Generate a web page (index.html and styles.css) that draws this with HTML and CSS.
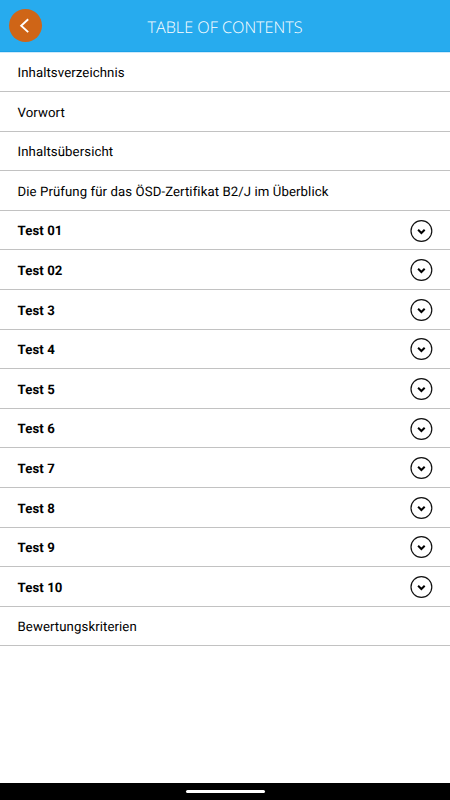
FILE: index.html
```html
<!DOCTYPE html>
<html lang="de">
<head>
    <meta charset="UTF-8">
    <meta name="viewport" content="width=device-width, initial-scale=1.0">
    <title>Table of Contents</title>
    <link rel="stylesheet" href="styles.css">
</head>
<body>
    <svg width="0" height="0" class="sprite">
        <symbol id="chevron" viewBox="0 0 24 24">
            <circle cx="12.4" cy="12" r="10.4" fill="none" stroke="#111" stroke-width="1.2"/>
            <path d="M9.1 10.7l3.3 3.3 3.3-3.3" fill="none" stroke="#000" stroke-width="2"/>
        </symbol>
    </svg>

    <header class="header">
        <button class="back" aria-label="Back">
            <svg width="33" height="33" viewBox="0 0 33 33">
                <path d="M19.2 10.3L12.2 16.7l7 6.4" fill="none" stroke="#fff" stroke-width="1.9"/>
            </svg>
        </button>
        <h1 class="title">TABLE OF CONTENTS</h1>
    </header>

    <ul class="toc">
        <li class="item"><span class="label">Inhaltsverzeichnis</span></li>
        <li class="item"><span class="label">Vorwort</span></li>
        <li class="item"><span class="label">Inhaltsübersicht</span></li>
        <li class="item"><span class="label">Die Prüfung für das ÖSD-Zertifikat B2/J im Überblick</span></li>
        <li class="item test"><span class="label">Test 01</span><svg class="toggle"><use href="#chevron"/></svg></li>
        <li class="item test"><span class="label">Test 02</span><svg class="toggle"><use href="#chevron"/></svg></li>
        <li class="item test"><span class="label">Test 3</span><svg class="toggle"><use href="#chevron"/></svg></li>
        <li class="item test"><span class="label">Test 4</span><svg class="toggle"><use href="#chevron"/></svg></li>
        <li class="item test"><span class="label">Test 5</span><svg class="toggle"><use href="#chevron"/></svg></li>
        <li class="item test"><span class="label">Test 6</span><svg class="toggle"><use href="#chevron"/></svg></li>
        <li class="item test"><span class="label">Test 7</span><svg class="toggle"><use href="#chevron"/></svg></li>
        <li class="item test"><span class="label">Test 8</span><svg class="toggle"><use href="#chevron"/></svg></li>
        <li class="item test"><span class="label">Test 9</span><svg class="toggle"><use href="#chevron"/></svg></li>
        <li class="item test"><span class="label">Test 10</span><svg class="toggle"><use href="#chevron"/></svg></li>
        <li class="item"><span class="label">Bewertungskriterien</span></li>
    </ul>

    <!-- System navigation bar -->
    <footer class="navbar"><div class="handle"></div></footer>
</body>
</html>
```
FILE: styles.css
```css
* {
    box-sizing: border-box;
}

body {
    margin: 0;
    height: 100vh;
    display: flex;
    flex-direction: column;
    overflow: hidden;
    background-color: #fff;
    color: #000;
    font-family: Roboto, "Liberation Sans", sans-serif;
    text-rendering: geometricPrecision;
}

.sprite {
    display: block;
    flex: none;
}

/* Header */
.header {
    flex: none;
    height: 52px;
    display: grid;
    grid-template-columns: 33px 1fr 33px;
    align-items: center;
    padding: 0 9px;
    background-color: #27abee;
    border-bottom: 1px solid #1ba1e8;
    box-shadow: 0 1px 0 #cfeafa;
}

.back {
    width: 33px;
    height: 33px;
    padding: 0;
    border: none;
    border-radius: 50%;
    background-color: #cf6517;
}

.back svg {
    display: block;
}

.title {
    margin: 0;
    padding-top: 2px;
    text-align: center;
    font-family: "Open Sans", sans-serif;
    font-size: 16.2px;
    font-weight: 300;
    line-height: 22px;
    color: #fff;
}

/* Contents list */
.toc {
    flex: 1;
    margin: 0;
    padding: 0.4px 0 0;
    list-style: none;
}

.item {
    height: 39.6px;
    display: flex;
    align-items: center;
    justify-content: space-between;
    padding: 2px 17px 0 17.5px;
    border-bottom: 1px solid #c2c2c2;
    font-size: 13.2px;
    letter-spacing: 0.09px;
}

.label {
    padding-top: 1.6px;
}

.test .label {
    font-weight: 700;
}

.toggle {
    width: 24px;
    height: 24px;
    margin-top: -1px;
}

/* Bottom navigation bar */
.navbar {
    flex: none;
    height: 17px;
    display: flex;
    align-items: center;
    justify-content: center;
    background-color: #000;
}

.handle {
    width: 79px;
    height: 3px;
    border-radius: 2px;
    background-color: #fff;
}
```
